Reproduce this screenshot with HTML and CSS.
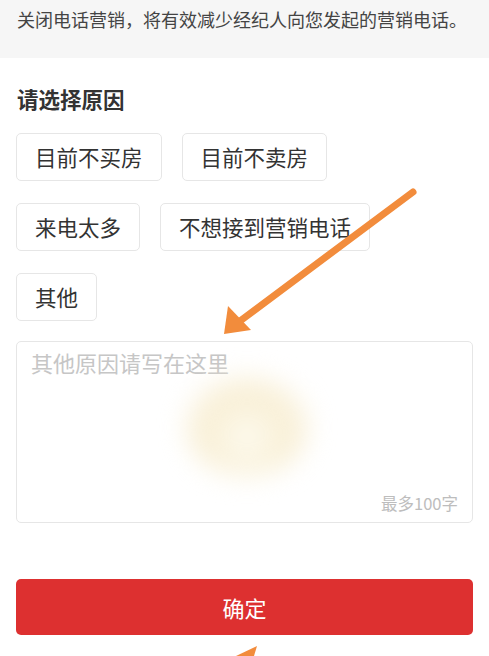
FILE: index.html
```html
<!DOCTYPE html>
<html lang="zh">
<head>
<meta charset="utf-8">
<link rel="stylesheet" href="styles.css">
</head>
<body>
<div class="page">
  <div class="notice">关闭电话营销，将有效减少经纪人向您发起的营销电话。</div>
  <div class="content">
    <h2 class="title">请选择原因</h2>
    <div class="chips">
      <span class="chip">目前不买房</span>
      <span class="chip">目前不卖房</span>
      <span class="chip">来电太多</span>
      <span class="chip">不想接到营销电话</span>
      <span class="chip">其他</span>
    </div>
    <div class="textbox">
      <div class="placeholder">其他原因请写在这里</div>
      <div class="blob"></div>
      <div class="counter">最多100字</div>
    </div>
    <button class="confirm">确定</button>
  </div>
  <svg class="annot" width="489" height="656" viewBox="0 0 489 656">
    <line x1="413" y1="192" x2="236" y2="324" stroke="#f28c3c" stroke-width="7" stroke-linecap="round"/>
    <polygon points="224,334 228,306 251,330" fill="#f28c3c"/>
    <polygon points="236,656 257,646 254,656" fill="#f28c3c"/>
  </svg>
</div>
</body>
</html>
```
FILE: styles.css
```css
* { box-sizing: border-box; }
html, body { margin: 0; padding: 0; background: #fff; }
body {
  font-family: "Noto Sans CJK SC", "Noto Sans", sans-serif;
  color: #333;
}
.page {
  position: relative;
  width: 489px;
  height: 656px;
  overflow: hidden;
}
.notice {
  height: 58px;
  background: #f6f6f6;
  padding: 6px 0 0 17px;
  font-size: 18px;
  line-height: 26px;
  color: #444;
  white-space: nowrap;
}
.content {
  padding: 0 16px;
}
.title {
  margin: 26px 0 0 1px;
  font-size: 21.5px;
  line-height: 29px;
  font-weight: 700;
  color: #333;
}
.chips {
  display: flex;
  flex-wrap: wrap;
  gap: 22px 20px;
  margin-top: 20px;
  width: 400px;
}
.chip {
  height: 48px;
  padding: 0 18px;
  border: 1px solid #e6e6e6;
  border-radius: 5px;
  font-size: 21.5px;
  line-height: 46px;
  color: #333;
  white-space: nowrap;
}
.textbox {
  position: relative;
  margin-top: 20px;
  height: 182px;
  border: 1px solid #e6e6e6;
  border-radius: 5px;
  padding: 5px 14px;
}
.placeholder {
  font-size: 22px;
  line-height: 30px;
  color: #c6c6c6;
}
.blob {
  position: absolute;
  left: 168px;
  top: 34px;
  width: 124px;
  height: 100px;
  border-radius: 50%;
  background: radial-gradient(ellipse at 50% 62%, #fefcf2 0%, #f8eed3 50%, rgba(248, 238, 211, 0) 100%);
  filter: blur(13px);
}
.counter {
  position: absolute;
  right: 14px;
  bottom: 8px;
  font-size: 16.5px;
  line-height: 22px;
  color: #bdbdbd;
}
.confirm {
  display: block;
  width: 100%;
  height: 56px;
  margin-top: 56px;
  border: none;
  border-radius: 5px;
  background: #dd3030;
  color: #fff;
  font-family: "Noto Sans CJK SC", "Noto Sans", sans-serif;
  font-size: 22px;
}
.annot {
  position: absolute;
  left: 0;
  top: 0;
  pointer-events: none;
}
```
